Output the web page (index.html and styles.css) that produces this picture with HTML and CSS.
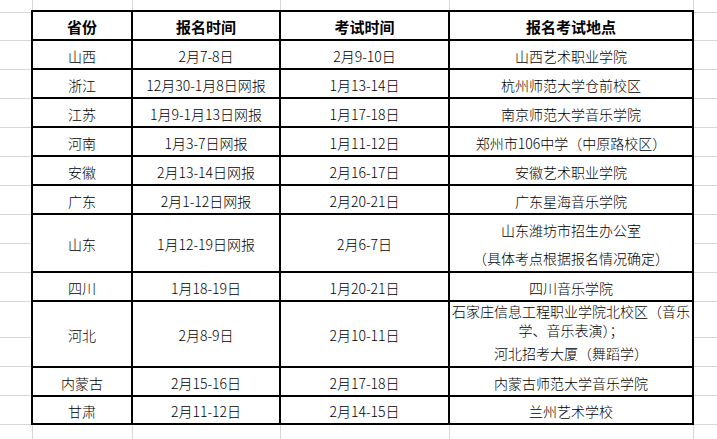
FILE: index.html
```html
<!DOCTYPE html>
<html lang="zh">
<head>
<meta charset="utf-8">
<title>报名考试时间地点</title>
<link rel="stylesheet" href="styles.css">
</head>
<body>
<div class="sheet">
  <div class="table">
    <div class="cell head">省份</div>
    <div class="cell head">报名时间</div>
    <div class="cell head">考试时间</div>
    <div class="cell head">报名考试地点</div>

    <div class="cell">山西</div>
    <div class="cell">2月7-8日</div>
    <div class="cell">2月9-10日</div>
    <div class="cell">山西艺术职业学院</div>

    <div class="cell">浙江</div>
    <div class="cell">12月30-1月8日网报</div>
    <div class="cell">1月13-14日</div>
    <div class="cell">杭州师范大学仓前校区</div>

    <div class="cell">江苏</div>
    <div class="cell">1月9-1月13日网报</div>
    <div class="cell">1月17-18日</div>
    <div class="cell">南京师范大学音乐学院</div>

    <div class="cell">河南</div>
    <div class="cell">1月3-7日网报</div>
    <div class="cell">1月11-12日</div>
    <div class="cell">郑州市106中学（中原路校区）</div>

    <div class="cell">安徽</div>
    <div class="cell">2月13-14日网报</div>
    <div class="cell">2月16-17日</div>
    <div class="cell">安徽艺术职业学院</div>

    <div class="cell">广东</div>
    <div class="cell">2月1-12日网报</div>
    <div class="cell">2月20-21日</div>
    <div class="cell">广东星海音乐学院</div>

    <div class="cell">山东</div>
    <div class="cell">1月12-19日网报</div>
    <div class="cell">2月6-7日</div>
    <div class="cell multi tall">
      <span class="line">山东潍坊市招生办公室</span>
      <span class="line">（具体考点根据报名情况确定）</span>
    </div>

    <div class="cell">四川</div>
    <div class="cell">1月18-19日</div>
    <div class="cell">1月20-21日</div>
    <div class="cell">四川音乐学院</div>

    <div class="cell">河北</div>
    <div class="cell">2月8-9日</div>
    <div class="cell">2月10-11日</div>
    <div class="cell multi hebei">
      <span class="line">石家庄信息工程职业学院北校区（音乐</span>
      <span class="line">学、音乐表演）；</span>
      <span class="line last">河北招考大厦（舞蹈学）</span>
    </div>

    <div class="cell">内蒙古</div>
    <div class="cell">2月15-16日</div>
    <div class="cell">2月17-18日</div>
    <div class="cell">内蒙古师范大学音乐学院</div>

    <div class="cell">甘肃</div>
    <div class="cell">2月11-12日</div>
    <div class="cell">2月14-15日</div>
    <div class="cell">兰州艺术学校</div>
  </div>
</div>
</body>
</html>
```
FILE: styles.css
```css
html, body {
  margin: 0;
  padding: 0;
}

body {
  width: 717px;
  height: 439px;
  overflow: hidden;
  background-color: #ffffff;
  font-family: "Noto Sans CJK SC", "Noto Sans", sans-serif;
  color: #000;
  background-image:
    linear-gradient(#d6d6d6, #d6d6d6),
    linear-gradient(#d6d6d6, #d6d6d6),
    linear-gradient(#d6d6d6, #d6d6d6),
    linear-gradient(#d6d6d6, #d6d6d6),
    linear-gradient(#d6d6d6, #d6d6d6),
    linear-gradient(#d6d6d6, #d6d6d6),
    linear-gradient(#d6d6d6, #d6d6d6),
    linear-gradient(#d6d6d6, #d6d6d6),
    linear-gradient(#d6d6d6, #d6d6d6),
    linear-gradient(#d6d6d6, #d6d6d6),
    linear-gradient(#d6d6d6, #d6d6d6),
    linear-gradient(#d6d6d6, #d6d6d6),
    linear-gradient(#d6d6d6, #d6d6d6),
    linear-gradient(#d6d6d6, #d6d6d6),
    linear-gradient(#d6d6d6, #d6d6d6),
    linear-gradient(#d6d6d6, #d6d6d6),
    linear-gradient(#d6d6d6, #d6d6d6),
    linear-gradient(#d6d6d6, #d6d6d6),
    linear-gradient(#d6d6d6, #d6d6d6),
    linear-gradient(#d6d6d6, #d6d6d6);
  background-repeat: no-repeat;
  background-size:
    1px 100%, 1px 100%, 1px 100%, 1px 100%, 1px 100%,
    100% 1px, 100% 1px, 100% 1px, 100% 1px, 100% 1px,
    100% 1px, 100% 1px, 100% 1px, 100% 1px, 100% 1px,
    100% 1px, 100% 1px, 100% 1px, 100% 1px, 100% 1px;
  background-position:
    32px 0, 132px 0, 280px 0, 449px 0, 693px 0,
    0 12px, 0 40px, 0 69px, 0 98px, 0 127px,
    0 156px, 0 185px, 0 214px, 0 243px, 0 272px,
    0 301px, 0 337px, 0 366px, 0 395px, 0 424px;
}

.sheet {
  padding: 10px 0 0 31px;
}

.table {
  display: inline-grid;
  grid-template-columns: 98px 146px 167px 242px;
  grid-template-rows: 27px 27px 27px 27px 27px 27px 27px 56px 27px 64px 27px 26px;
  gap: 2px;
  padding: 2px;
  background: #000;
}

.cell {
  background: #fff;
  display: flex;
  align-items: center;
  justify-content: center;
  text-align: center;
  font-size: 14px;
  font-weight: 300;
  line-height: 18px;
  padding-top: 2px;
  white-space: nowrap;
}

.head {
  font-size: 15px;
  font-weight: bold;
}

.multi {
  flex-direction: column;
}

.line {
  display: block;
}

.tall .line {
  line-height: 28px;
}

.hebei {
  padding-top: 0;
  justify-content: flex-start;
}

.hebei .line {
  line-height: 19px;
}

.hebei .line.last {
  margin-top: 4px;
}
```
